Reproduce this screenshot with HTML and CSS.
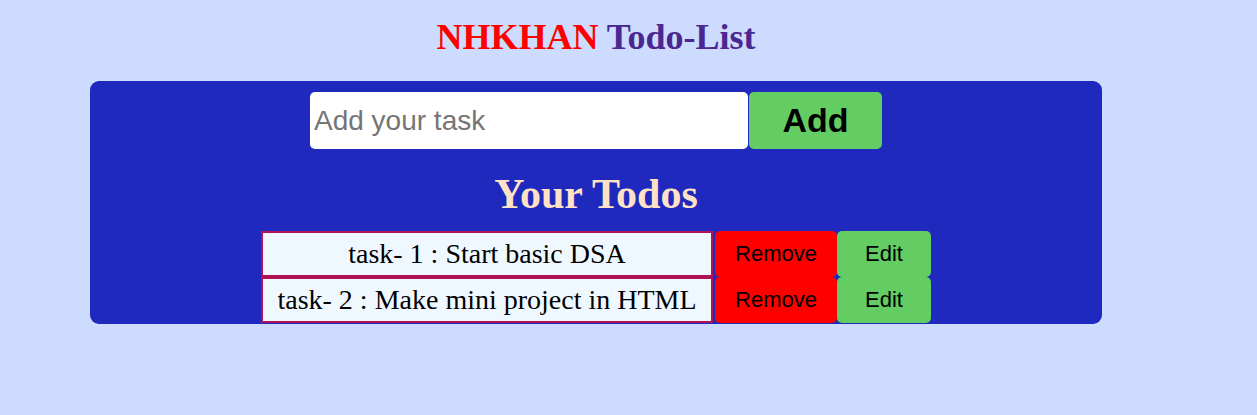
FILE: index.html
```html
<!DOCTYPE html>
<html>
<head>
<meta charset="utf-8">
<link rel="stylesheet" href="styles.css">
</head>
<body>
<div class="page">
  <h1 class="title"><span class="brand">NHKHAN</span> Todo-List</h1>
  <div class="card">
    <div class="add-row">
      <input class="task-input" type="text" placeholder="Add your task">
      <button class="add-btn">Add</button>
    </div>
    <h2 class="subtitle">Your Todos</h2>
    <ul class="todo-list">
      <li class="todo">
        <span class="todo-text">task- 1 : Start basic DSA</span>
        <button class="btn remove">Remove</button>
        <button class="btn edit">Edit</button>
      </li>
      <li class="todo">
        <span class="todo-text">task- 2 : Make mini project in HTML</span>
        <button class="btn remove">Remove</button>
        <button class="btn edit">Edit</button>
      </li>
    </ul>
  </div>
</div>
</body>
</html>
```

FILE: styles.css
```css
html, body {
  margin: 0;
  padding: 0;
}
body {
  background: #cddcfe;
  font-family: "Liberation Serif", "Times New Roman", serif;
}
.page {
  width: 1012px;
  margin-left: 90px;
  padding-top: 17px;
}
.title {
  margin: 0 0 24px;
  text-align: center;
  font-size: 36px;
  line-height: 40px;
  font-weight: bold;
  color: #4b2891;
}
.brand {
  color: #ff0000;
}
.card {
  background: #2029bd;
  border-radius: 9px;
  padding: 11px 0 1px;
  display: flex;
  flex-direction: column;
  align-items: center;
}
.add-row {
  display: flex;
  gap: 1px;
}
.task-input {
  width: 438px;
  height: 57px;
  box-sizing: border-box;
  border: none;
  border-radius: 5px;
  padding: 0 4px;
  font-family: "Liberation Sans", Arial, sans-serif;
  font-size: 28px;
  background: #fff;
  outline: none;
}
.task-input::placeholder {
  color: #757575;
}
.add-btn {
  width: 133px;
  height: 57px;
  border: none;
  border-radius: 5px;
  background: #63cd63;
  font-family: "Liberation Sans", Arial, sans-serif;
  font-weight: bold;
  font-size: 34px;
  color: #000;
  padding: 0;
}
.subtitle {
  margin: 22px 0 0;
  font-size: 42px;
  line-height: 46px;
  font-weight: bold;
  color: #ffe1c6;
  text-align: center;
}
.todo-list {
  list-style: none;
  margin: 14px 0 0;
  padding: 0;
  display: flex;
  flex-direction: column;
}
.todo {
  display: flex;
  align-items: stretch;
  height: 46px;
}
.todo-text {
  flex: 0 0 452px;
  box-sizing: border-box;
  border: 2px solid #b01258;
  background: #f0f8ff;
  font-size: 28px;
  display: flex;
  align-items: center;
  justify-content: center;
  color: #000;
  margin-right: 2px;
}
.btn {
  border: none;
  border-radius: 5px;
  font-family: "Liberation Sans", Arial, sans-serif;
  font-size: 22px;
  color: #000;
  padding: 0;
}
.remove {
  flex: 0 0 122px;
  background: #ff0000;
}
.edit {
  flex: 0 0 94px;
  background: #63cd63;
}
```
